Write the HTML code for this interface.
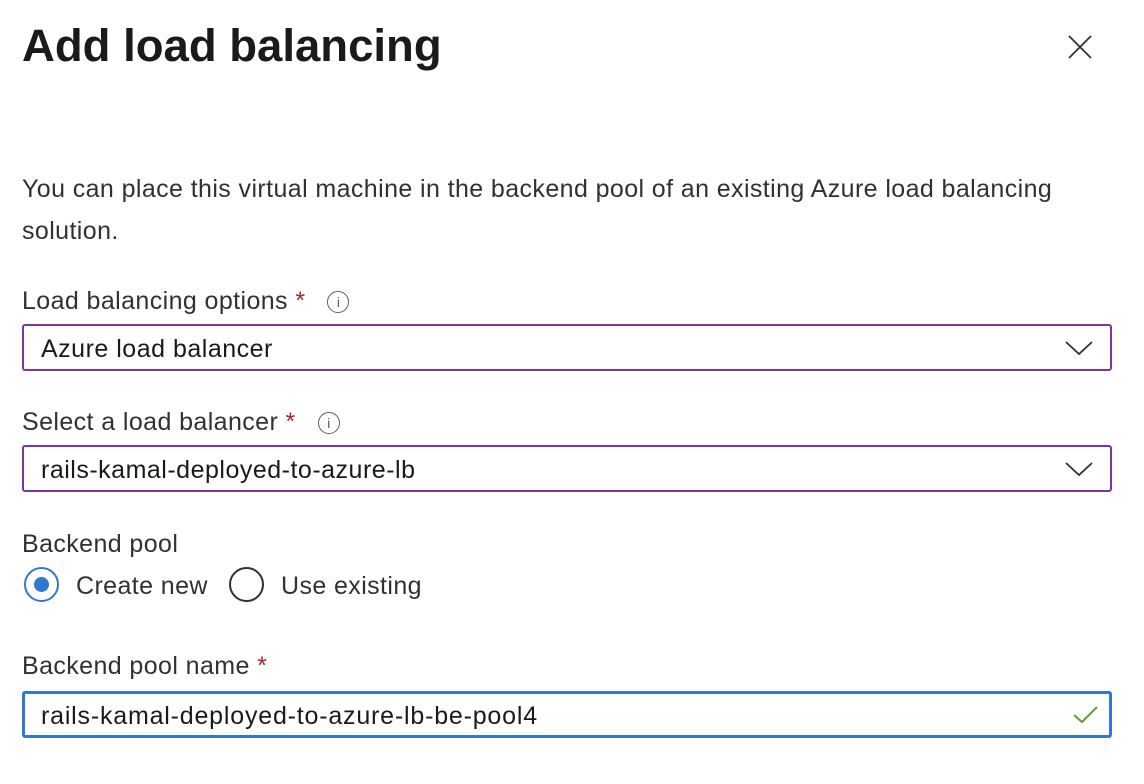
<!DOCTYPE html>
<html><head><meta charset="utf-8"><style>
body{margin:0;width:1144px;height:784px;background:#fff;font-family:"Liberation Sans",sans-serif;color:#323130;position:relative;overflow:hidden}
.a{position:absolute;white-space:nowrap}
h1{position:absolute;left:22px;top:20px;margin:0;font-size:45.5px;font-weight:bold;color:#1b1a19;letter-spacing:0}
.t{font-size:25px;letter-spacing:0.4px}
.box{position:absolute;left:22px;width:1086px;height:43px;border:2px solid #8032a0;border-radius:3px}
.box span{position:absolute;left:17px;top:9px;font-size:25px;letter-spacing:0.5px;color:#1b1a19}
.star{color:#a4262c}
.info{display:inline-block;width:22px;height:22px;border:1.3px solid #605e5c;border-radius:50%;font-size:14px;text-align:center;line-height:20px;color:#605e5c;vertical-align:2px;margin-left:22px;box-sizing:border-box;letter-spacing:0}
.radio{position:absolute;width:35px;height:35px;border:2px solid #323130;border-radius:50%;box-sizing:border-box}
</style></head><body>
<h1>Add load balancing</h1>
<svg class="a" style="left:1067px;top:34px" width="26" height="26"><path d="M2 2L24 24M24 2L2 24" stroke="#323130" stroke-width="1.8"/></svg>
<div class="a t" style="left:22px;top:175px">You can place this virtual machine in the backend pool of an existing Azure load balancing</div>
<div class="a t" style="left:22px;top:217px">solution.</div>
<div class="a t" style="left:22px;top:287px">Load balancing options <span class="star">*</span><span class="info">i</span></div>
<div class="box" style="top:324px"><span>Azure load balancer</span><svg class="a" style="right:17px;top:14px" width="28" height="16"><path d="M1 2L14 14L27 2" stroke="#323130" stroke-width="1.8" fill="none"/></svg></div>
<div class="a t" style="left:22px;top:408px">Select a load balancer <span class="star">*</span><span class="info">i</span></div>
<div class="box" style="top:445px"><span>rails-kamal-deployed-to-azure-lb</span><svg class="a" style="right:17px;top:14px" width="28" height="16"><path d="M1 2L14 14L27 2" stroke="#323130" stroke-width="1.8" fill="none"/></svg></div>
<div class="a t" style="left:22px;top:530px">Backend pool</div>
<div class="radio" style="left:24px;top:567px;border-color:#3078d0"><div style="position:absolute;left:8px;top:8px;width:15px;height:15px;border-radius:50%;background:#3078d0"></div></div>
<div class="a t" style="left:76px;top:572px">Create new</div>
<div class="radio" style="left:229px;top:567px"></div>
<div class="a t" style="left:281px;top:572px">Use existing</div>
<div class="a t" style="left:22px;top:652px">Backend pool name <span class="star">*</span></div>
<div class="box" style="top:691px;border:3px solid #3078d0;width:1084px;height:41px"><span style="left:16px;top:8px;letter-spacing:0.8px">rails-kamal-deployed-to-azure-lb-be-pool4<span style="border-left:1.5px solid #000;margin-left:1px"></span></span><svg class="a" style="right:10px;top:11px" width="26" height="20"><path d="M1 10L9 17L24 2" stroke="#5ea02f" stroke-width="2" fill="none"/></svg></div>
</body></html>
